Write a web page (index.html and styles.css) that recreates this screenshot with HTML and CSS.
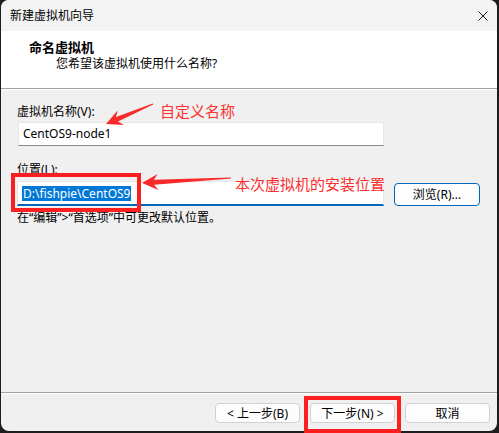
FILE: index.html
```html
<!DOCTYPE html>
<html lang="zh-CN">
<head>
<meta charset="utf-8">
<title>新建虚拟机向导</title>
<link rel="stylesheet" href="styles.css">
</head>
<body>
<div class="window">
  <div class="titlebar">
    <span class="title">新建虚拟机向导</span>
    <svg class="close" width="10" height="10" viewBox="0 0 10 10"><path d="M0.5 0.5 L9.5 9.5 M9.5 0.5 L0.5 9.5" stroke="#1a1a1a" stroke-width="1" fill="none"/></svg>
  </div>
  <div class="header">
    <div class="h-title">命名虚拟机</div>
    <div class="h-sub">您希望该虚拟机使用什么名称?</div>
  </div>
  <div class="sep"></div>
  <div class="content">
    <div class="label label-first">虚拟机名称(V):</div>
    <div class="field field-name">CentOS9-node1</div>
    <div class="label label-second">位置(L):</div>
    <div class="row">
      <div class="field field-loc"><span class="sel">D:\fishpie\CentOS9</span></div>
      <div class="btn btn-browse">浏览(R)...</div>
    </div>
    <div class="hint">在“编辑”&gt;“首选项”中可更改默认位置。</div>
  </div>
  <div class="sep"></div>
  <div class="footer">
    <div class="btn btn-nav">&lt; 上一步(B)</div>
    <div class="btn btn-nav">下一步(N) &gt;</div>
    <div class="btn btn-nav">取消</div>
  </div>
</div>

<svg class="overlay" width="499" height="433" viewBox="0 0 499 433">
  <polygon fill="#f82a2a" points="106,124 123.85,125.1 118.02,121.6 153.2,104.5 152.8,103.5 116.06,117 117.59,110.38"/>
  <polygon fill="#f82a2a" points="142,183 158.42,190.1 154.12,184.83 231,178.6 231,177.4 153.84,179.83 157.52,174.1"/>
  <rect x="13" y="175" width="126" height="35" fill="none" stroke="#fb1f1f" stroke-width="4"/>
  <rect x="306" y="398" width="93" height="33" fill="none" stroke="#fb1f1f" stroke-width="4"/>
</svg>
<div class="note note-name">自定义名称</div>
<div class="note note-loc">本次虚拟机的安装位置</div>
</body>
</html>
```

FILE: styles.css
```css
html, body {
  margin: 0;
  padding: 0;
  background: #1e1e1e;
}
body {
  position: relative;
  width: 499px;
  height: 433px;
  overflow: hidden;
  font-family: "Noto Sans", "Noto Sans CJK SC", sans-serif;
  font-size: 12px;
  color: #000;
}
.window {
  margin-left: 1px;
  width: 496px;
  height: 431px;
  background: #f0f0f0;
  border-radius: 8px;
  overflow: hidden;
  display: flex;
  flex-direction: column;
}
.titlebar {
  height: 31px;
  flex: none;
  background: #f3f3f3;
  display: flex;
  align-items: center;
  justify-content: space-between;
  padding: 0 9px 0 9px;
  line-height: 16px;
}
.close {
  display: block;
}
.header {
  height: 57px;
  flex: none;
  background: #ffffff;
  box-sizing: border-box;
  padding-top: 8px;
  line-height: 16px;
}
.h-title {
  font-weight: bold;
  font-size: 13px;
  padding-left: 28px;
}
.h-sub {
  margin-top: 1px;
  padding-left: 55px;
}
.sep {
  flex: none;
  height: 1px;
  background: #a0a0a0;
  border-bottom: 1px solid #ffffff;
}
.content {
  flex: 1;
  padding: 0 17px 0 16px;
  line-height: 16px;
}
.label-first {
  margin-top: 14px;
}
.label-second {
  margin-top: 16px;
}
.field {
  box-sizing: border-box;
  background: #ffffff;
  border: 1px solid #e6e6e6;
  display: flex;
  align-items: center;
  padding-left: 4px;
}
.field-name {
  margin-top: 2px;
  margin-left: 1px;
  width: 366px;
  height: 24px;
  border-bottom-color: #878787;
}
.row {
  margin-top: 3px;
  display: flex;
  align-items: flex-end;
  gap: 10px;
}
.field-loc {
  width: 367px;
  height: 25px;
  border-bottom: 2px solid #0067c0;
  padding-top: 1px;
}
.sel {
  background: #0078d7;
  color: #ffffff;
  line-height: 15px;
  padding: 0 1px;
}
.btn {
  box-sizing: border-box;
  display: flex;
  align-items: center;
  justify-content: center;
  background: #fdfdfd;
  border: 1px solid #d0d0d0;
  border-radius: 4px;
}
.btn-browse {
  width: 86px;
  height: 23px;
  border-color: #0067c0;
}
.hint {
  margin-top: 4px;
}
.footer {
  flex: none;
  display: flex;
  justify-content: flex-end;
  gap: 10px;
  padding: 9px 7px 8px 0;
}
.btn-nav {
  width: 85px;
  height: 20px;
}
.overlay {
  position: absolute;
  left: 0;
  top: 0;
}
.note {
  position: absolute;
  color: #fa3030;
  font-family: "Noto Sans CJK SC", sans-serif;
  font-size: 15px;
  line-height: 20px;
}
.note-name {
  left: 160px;
  top: 101px;
}
.note-loc {
  left: 235px;
  top: 174px;
}
```
